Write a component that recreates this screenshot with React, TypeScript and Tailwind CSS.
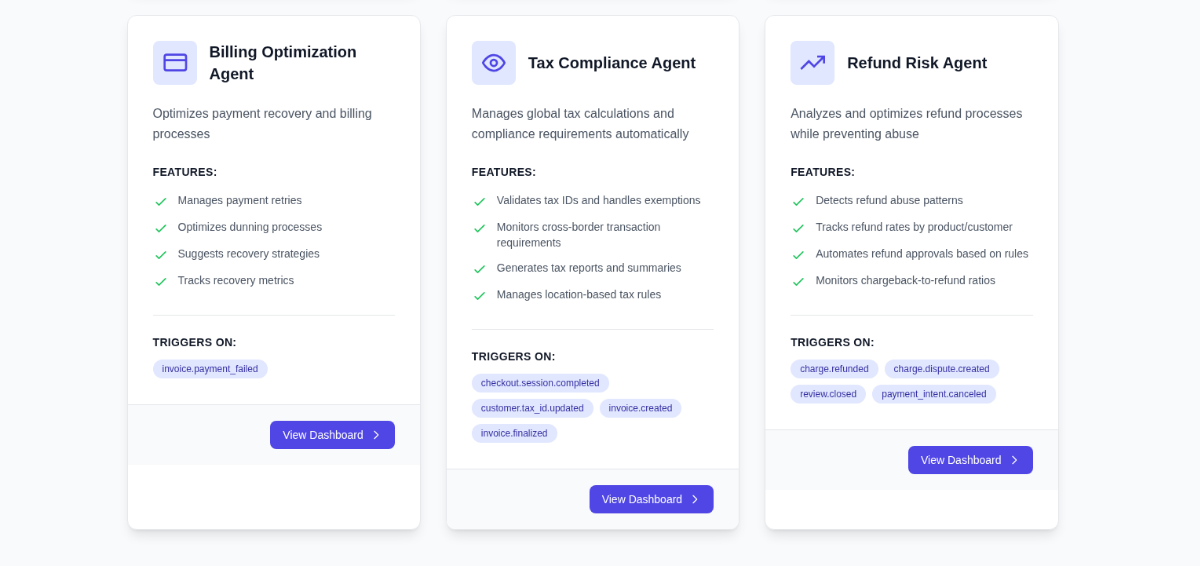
import type { ReactNode } from 'react';

type Agent = {
    name: string;
    description: string;
    icon: ReactNode;
    features: string[];
    triggers: string[];
};

const agents: Agent[] = [
    {
        name: 'Billing Optimization Agent',
        description: 'Optimizes payment recovery and billing processes',
        icon: (
            <svg
                className="h-8 w-8"
                viewBox="0 0 24 24"
                fill="none"
                stroke="currentColor"
                strokeWidth="2"
            >
                <rect x="2" y="4.25" width="20.5" height="15" rx="2" />
                <path d="M2 9.5h20.5" />
            </svg>
        ),
        features: [
            'Manages payment retries',
            'Optimizes dunning processes',
            'Suggests recovery strategies',
            'Tracks recovery metrics',
        ],
        triggers: ['invoice.payment_failed'],
    },
    {
        name: 'Tax Compliance Agent',
        description:
            'Manages global tax calculations and compliance requirements automatically',
        icon: (
            <svg
                className="h-[30px] w-[30px]"
                viewBox="0 0 24 24"
                fill="none"
                stroke="currentColor"
                strokeWidth="2.2"
            >
                <path d="M1 12s4-8 11-8 11 8 11 8-4 8-11 8-11-8-11-8z" />
                <circle cx="12" cy="12" r="3.2" />
            </svg>
        ),
        features: [
            'Validates tax IDs and handles exemptions',
            'Monitors cross-border transaction requirements',
            'Generates tax reports and summaries',
            'Manages location-based tax rules',
        ],
        triggers: [
            'checkout.session.completed',
            'customer.tax_id.updated',
            'invoice.created',
            'invoice.finalized',
        ],
    },
    {
        name: 'Refund Risk Agent',
        description:
            'Analyzes and optimizes refund processes while preventing abuse',
        icon: (
            <svg
                className="h-8 w-8"
                viewBox="0 0 24 24"
                fill="none"
                stroke="currentColor"
                strokeWidth="2"
            >
                <path d="M23 6l-9.5 9.5-5-5L1 18" />
                <path d="M16.5 6H23v6.5" />
            </svg>
        ),
        features: [
            'Detects refund abuse patterns',
            'Tracks refund rates by product/customer',
            'Automates refund approvals based on rules',
            'Monitors chargeback-to-refund ratios',
        ],
        triggers: [
            'charge.refunded',
            'charge.dispute.created',
            'review.closed',
            'payment_intent.canceled',
        ],
    },
];

function AgentCard({ agent }: { agent: Agent }) {
    return (
        <div className="overflow-hidden rounded-xl border border-gray-200 bg-white shadow-lg">
            <div className="px-8 pt-8 pb-[33px]">
                <div className="mb-6 flex items-center">
                    <div className="mr-4 flex h-14 w-14 shrink-0 items-center justify-center rounded-lg bg-[#e0e7ff] text-[#4f46e5]">
                        {agent.icon}
                    </div>
                    <h3 className="text-xl font-bold text-[#111827]">
                        {agent.name}
                    </h3>
                </div>

                <p className="mb-[25px] leading-relaxed text-[#4b5563]">
                    {agent.description}
                </p>

                {/* Features */}
                <h4 className="mb-4 text-sm font-semibold tracking-wide text-[#111827] uppercase">
                    Features:
                </h4>
                <ul className="mb-8 space-y-3">
                    {agent.features.map((feature) => (
                        <li key={feature} className="flex items-start">
                            <svg
                                className="mt-0.5 mr-3 h-5 w-5 shrink-0 text-[#22c55e]"
                                viewBox="0 0 24 24"
                                fill="none"
                                stroke="currentColor"
                                strokeWidth="2"
                                strokeLinecap="round"
                                strokeLinejoin="round"
                            >
                                <path d="M5 13l4 4L19 7" />
                            </svg>
                            <span className="text-sm text-[#4b5563]">
                                {feature}
                            </span>
                        </li>
                    ))}
                </ul>

                {/* Triggers */}
                <div className="border-t border-gray-200 pt-6">
                    <h4 className="mb-3 text-sm font-semibold tracking-wide text-[#111827] uppercase">
                        Triggers on:
                    </h4>
                    <div className="flex flex-wrap gap-2">
                        {agent.triggers.map((trigger) => (
                            <span
                                key={trigger}
                                className="rounded-full bg-[#e0e7ff] px-3 py-1 text-xs font-medium text-[#3730a3]"
                            >
                                {trigger}
                            </span>
                        ))}
                    </div>
                </div>
            </div>

            <div className="flex justify-end border-t border-gray-200 bg-[#f9fafb] px-8 py-5">
                <button className="flex items-center rounded-lg bg-[#4f46e5] px-4 py-2 text-sm font-medium text-white">
                    View Dashboard
                    <svg
                        className="ml-2 h-4 w-4"
                        viewBox="0 0 24 24"
                        fill="none"
                        stroke="currentColor"
                        strokeWidth="2"
                        strokeLinecap="round"
                        strokeLinejoin="round"
                    >
                        <path d="M9 5l7 7-7 7" />
                    </svg>
                </button>
            </div>
        </div>
    );
}

export default function App() {
    return (
        <div className="h-screen overflow-hidden bg-[#f9fafb] font-['Liberation_Sans',sans-serif]">
            <div className="origin-top-left scale-[0.785] will-change-transform">
                <div className="ml-[161.5px] grid w-[1187px] grid-cols-3 gap-x-8">
                    {/* Bottom edge of the row scrolled out above */}
                    {agents.map((agent) => (
                        <div
                            key={agent.name}
                            className="-mt-[65px] mb-8 h-[52px] rounded-xl bg-white shadow-lg"
                        />
                    ))}
                    {agents.map((agent) => (
                        <AgentCard key={agent.name} agent={agent} />
                    ))}
                </div>
            </div>
        </div>
    );
}
